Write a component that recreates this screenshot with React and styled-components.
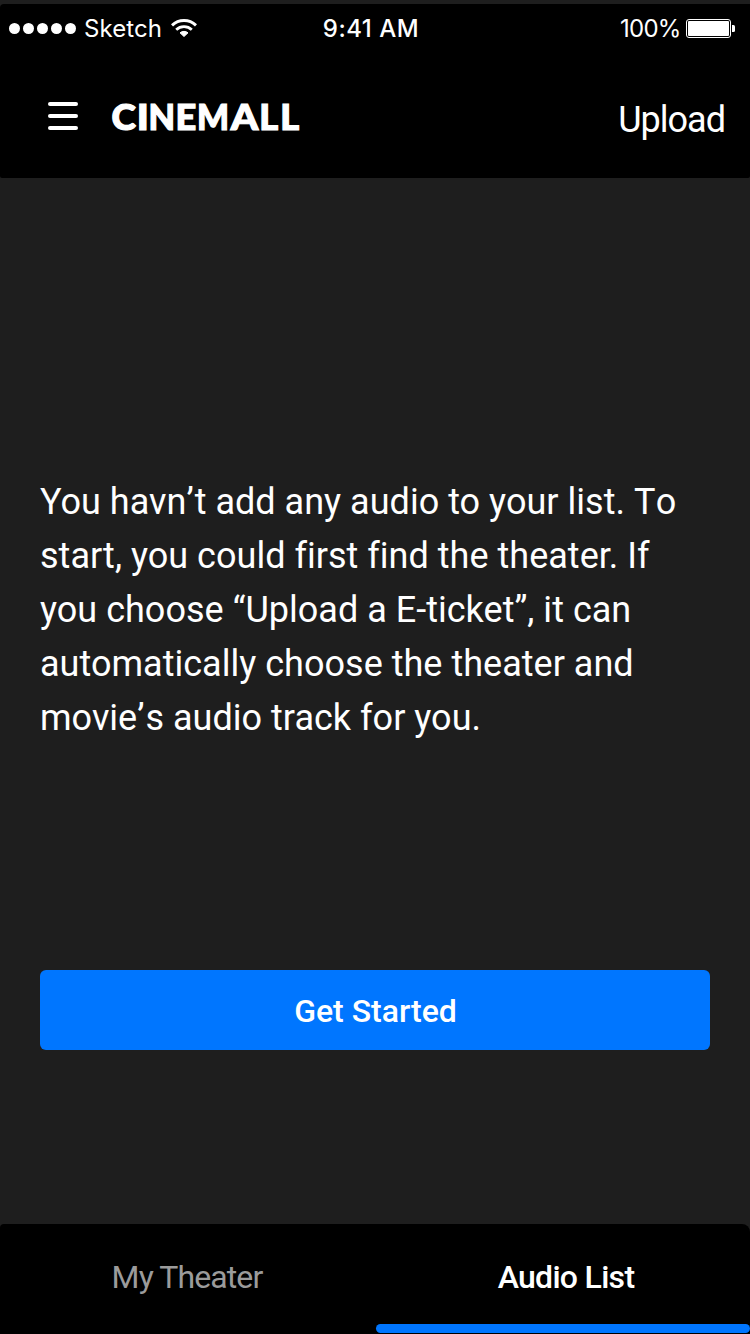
import React from "react";
import styled, { createGlobalStyle } from "styled-components";

const GlobalStyle = createGlobalStyle`
  * { box-sizing: border-box; }
  body { margin: 0; background: #1e1e1e; }
`;

const Screen = styled.div`
  width: 750px;
  height: 1334px;
  padding-top: 4px;
  display: flex;
  flex-direction: column;
  overflow: hidden;
  background: #1e1e1e;
  color: #fff;
  font-family: Roboto, "Liberation Sans", sans-serif;
`;

const Header = styled.header`
  height: 174px;
  flex: none;
  background: #000;
  border-radius: 4px 0 2px 2px;
`;

const StatusBar = styled.div`
  height: 50px;
  display: grid;
  grid-template-columns: 1fr auto 1fr;
  align-items: center;
  padding: 0 15px 0 9px;
  font-family: Inter, "Liberation Sans", sans-serif;
  font-size: 24px;
  line-height: 30px;
`;

const Carrier = styled.div`
  display: flex;
  align-items: center;
`;

const SignalDots = styled.div`
  display: flex;
  gap: 3px;
  margin: -1px 8px 0 0;
`;

const Dot = styled.i`
  width: 11px;
  height: 11px;
  border-radius: 50%;
  background: #fff;
`;

const StatusText = styled.span`
  font-weight: ${(p) => p.$weight || 400};
  letter-spacing: ${(p) => p.$spacing || 0}px;
  margin-right: ${(p) => p.$after || 0}px;
`;

const WifiIcon = styled.svg`
  margin: -2px 0 0 9px;
`;

const Power = styled.div`
  display: flex;
  align-items: center;
  justify-content: flex-end;
  gap: 5.5px;
`;

const BatteryIcon = styled.svg`
  margin-top: -1px;
`;

const NavBar = styled.div`
  height: 124px;
  display: flex;
  align-items: flex-start;
  padding: 44px 25px 0 48px;
`;

const MenuButton = styled.button`
  width: 30px;
  height: 36px;
  padding: 4px 0;
  border: 0;
  background: none;
  display: flex;
  flex-direction: column;
  justify-content: space-between;
`;

const MenuLine = styled.span`
  height: 4px;
  border-radius: 2px;
  background: #fff;
`;

const Logo = styled.svg`
  margin: -12px 0 0 22px;
  font-family: Lato, sans-serif;
  font-weight: 900;
  font-size: 36.2px;
`;

const UploadLink = styled.a`
  margin: 1px 0 0 auto;
  font-size: 36px;
  line-height: 42px;
  letter-spacing: -1px;
`;

const Content = styled.main`
  flex: 1;
  padding: 297px 40px 0;
`;

const Message = styled.p`
  margin: 0 0 225px;
  font-size: 36px;
  line-height: 54px;
  letter-spacing: 0.02px;
  white-space: nowrap;
`;

const Loose = styled.span`
  letter-spacing: ${(p) => p.$by}px;
`;

const PrimaryButton = styled.button`
  display: block;
  width: 100%;
  height: 80px;
  padding: 2px 0 0 1px;
  border: 0;
  border-radius: 6px;
  background: #0076ff;
  color: #fff;
  font: 500 32px/38px Roboto, sans-serif;
`;

const TabBar = styled.nav`
  height: 110px;
  flex: none;
  display: grid;
  grid-template-columns: 376px 374px;
  background: #000;
  border-radius: 4px 8px 0 0;
`;

const Tab = styled.div`
  display: flex;
  flex-direction: column;
  justify-content: space-between;
  padding: 34px 0 1px;
  text-align: center;
  font-size: 32px;
  line-height: 38px;
  font-weight: ${(p) => (p.$active ? 500 : 400)};
  letter-spacing: ${(p) => (p.$active ? -0.7 : -0.9)}px;
  color: ${(p) => (p.$active ? "#fff" : "#9b9b9b")};
`;

const TabLabel = styled.span`
  padding: 0 ${(p) => p.$right || 0}px 0 ${(p) => p.$left || 0}px;
`;

const ActiveLine = styled.span`
  height: 9px;
  border-radius: 4.5px;
  background: #0076ff;
`;

// Each wordmark letter: character, left position and horizontal stretch.
const logoLetters = [
  ["C", 11.4, 1.02],
  ["I", 36.8, 1.1],
  ["N", 48.4, 0.95],
  ["E", 75.4, 1.0],
  ["M", 97, 0.93],
  ["A", 130.8, 1.08],
  ["L", 159.2, 1.0],
  ["L", 180.2, 1.0],
];

export default function App() {
  return (
    <Screen>
      <GlobalStyle />
      <Header>
        <StatusBar>
          <Carrier>
            <SignalDots>
              {[0, 1, 2, 3, 4].map((n) => <Dot key={n} />)}
            </SignalDots>
            <StatusText $spacing={0.1}>Sketch</StatusText>
            <WifiIcon width="26" height="18" viewBox="0 0 26 18" fill="none" stroke="#fff">
              <path d="M1 6.3C7.8-.1 18.2-.1 25 6.3" strokeWidth="3" />
              <path d="M5.2 10.7c4.4-4.1 11.2-4.1 15.6 0" strokeWidth="2.8" />
              <path d="M13 17.5 9 13.8c2.3-1.9 5.7-1.9 8 0Z" fill="#fff" />
            </WifiIcon>
          </Carrier>
          <StatusText $weight={500} $spacing={0.5} $after={2}>9:41 AM</StatusText>
          <Power>
            <StatusText $spacing={-0.8}>100%</StatusText>
            <BatteryIcon width="49" height="19" viewBox="0 0 49 19">
              <rect x=".5" y=".5" width="44" height="18" rx="2.5" fill="none" stroke="#fff" />
              <rect x="2" y="2" width="41" height="15" rx="1" fill="#fff" />
              <path d="M46 6h1.5q1.5 0 1.5 1.5v4q0 1.5-1.5 1.5H46Z" fill="#fff" />
            </BatteryIcon>
          </Power>
        </StatusBar>
        <NavBar>
          <MenuButton aria-label="Menu">
            <MenuLine />
            <MenuLine />
            <MenuLine />
          </MenuButton>
          <Logo width="220" height="64" viewBox="0 0 220 64" fill="#fff" stroke="#fff" strokeWidth="1.2">
            {logoLetters.map(([letter, x, stretch], i) => (
              <text key={i} transform={`translate(${x} 44) scale(${stretch} 1)`}>{letter}</text>
            ))}
          </Logo>
          <UploadLink>Upload</UploadLink>
        </NavBar>
      </Header>
      <Content>
        <Message>
          You havn<Loose $by={1}>’</Loose>t add any audio to your list. <Loose $by={0.3}>T</Loose>o
          <br />
          start, you could first find the theater. If
          <br />
          you choose “Upload a E-ticket”, it can
          <br />
          automatically choose the theater and
          <br />
          movie<Loose $by={1}>’</Loose>s audio track for you.
        </Message>
        <PrimaryButton>Get Started</PrimaryButton>
      </Content>
      <TabBar>
        <Tab><TabLabel $right={2}>My Theater</TabLabel></Tab>
        <Tab $active>
          <TabLabel $left={6}>Audio List</TabLabel>
          <ActiveLine />
        </Tab>
      </TabBar>
    </Screen>
  );
}
